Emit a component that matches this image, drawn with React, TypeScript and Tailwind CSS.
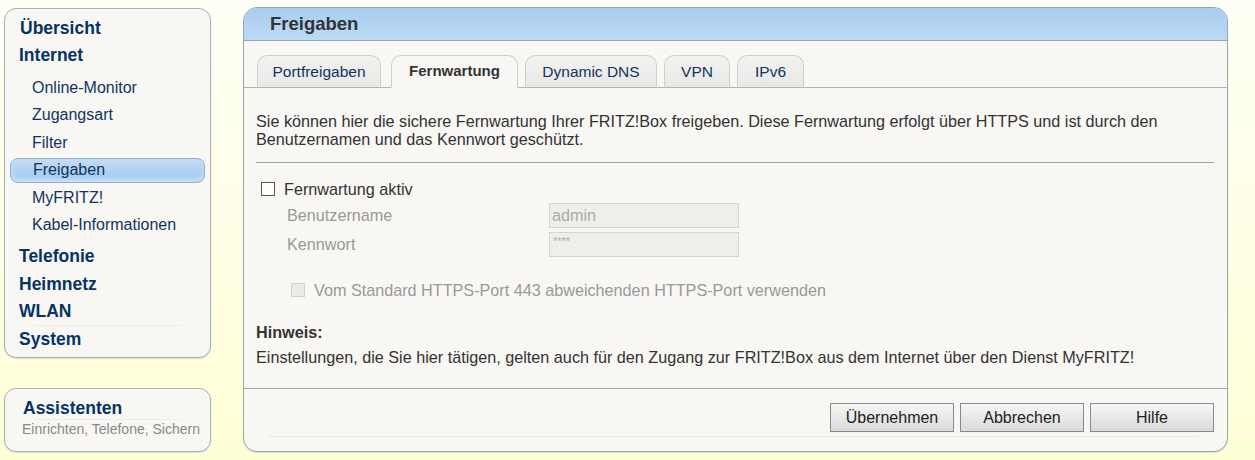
const navBold = 'text-[17.5px] font-bold text-[#063365]'
const navSub = 'text-[16px] text-[#12335e]'

function NavRow({ label, sub, active, className = '' }: { label: string; sub?: boolean; active?: boolean; className?: string }) {
  if (active) {
    return (
      <div className={`h-[27.5px] flex items-center ${className}`}>
        <div className="ml-[5px] w-[195px] h-[25px] flex items-center rounded-[8px] border border-[#8fb0c8] bg-[linear-gradient(to_bottom,#c4ddf3_0%,#b0d1f1_50%,#9ec8f3_100%)] shadow-[inset_0_-3px_4px_rgba(255,255,255,0.45)] pl-[22px]">
          <span className={navSub}>{label}</span>
        </div>
      </div>
    )
  }
  return (
    <div className={`h-[27.5px] flex items-center ${sub ? 'pl-[27px]' : 'pl-[14px]'} ${className}`}>
      <span className={sub ? navSub : navBold}>{label}</span>
    </div>
  )
}

function Tab({ label, w, active, className = '' }: { label: string; w: string; active?: boolean; className?: string }) {
  return (
    <div
      className={`${w} h-[33px] -mb-px flex items-center justify-center rounded-t-[10px] border border-[#cfcfcf] ${
        active
          ? 'bg-[#f8f7f3] border-b-[#f8f7f3] font-bold text-[15px] text-[#333]'
          : 'bg-[linear-gradient(to_bottom,#f2f2f0,#e8e8e6)] border-b-[#b4b4b4] text-[15.5px] text-[#12335e]'
      } ${className}`}
    >
      {label}
    </div>
  )
}

function Button({ label }: { label: string }) {
  return (
    <button className="w-[124px] h-[29px] border border-[#8a8a8a] bg-[linear-gradient(to_bottom,#f6f6f6,#dadada)] text-[16px] text-[#222]">
      {label}
    </button>
  )
}

export default function App() {
  return (
    <div
      className="w-[1255px] h-[460px] flex bg-[linear-gradient(to_bottom,#fffff6,#ffffd6)] text-[#333]"
      style={{ fontFamily: '"Liberation Sans", Arial, sans-serif' }}
    >
      {/* sidebar */}
      <div className="ml-[4px] mt-[8px] w-[207px] flex flex-col">
        <div className="h-[350px] rounded-[12px] border border-[#9fb3b8] bg-[#f8f7f3] shadow-[0_1px_1px_rgba(120,140,140,0.25)] pt-[5px]">
          <NavRow label="Übersicht" className="!pl-[15px]" />
          <NavRow label="Internet" />
          <NavRow label="Online-Monitor" sub className="mt-[5px]" />
          <NavRow label="Zugangsart" sub />
          <NavRow label="Filter" sub />
          <NavRow label="Freigaben" active />
          <NavRow label="MyFRITZ!" sub />
          <NavRow label="Kabel-Informationen" sub />
          <NavRow label="Telefonie" className="mt-[3.5px]" />
          <NavRow label="Heimnetz" />
          <NavRow label="WLAN" />
          <div className="mx-[29px] border-t border-[#ececea]" />
          <NavRow label="System" className="-mt-px" />
        </div>
        <div className="mt-[30px] h-[64px] rounded-[12px] border border-[#9fb3b8] bg-[#f8f7f3] shadow-[0_1px_1px_rgba(120,140,140,0.25)] pt-[9px] pl-[18px]">
          <div className={`${navBold} leading-[20px]`}>Assistenten</div>
          <div className="ml-[11px] mr-[28px] border-t border-[#ececea] mt-[1px]" />
          <div className="-ml-[1px] text-[14px] leading-[18px] text-[#888]">Einrichten, Telefone, Sichern</div>
        </div>
      </div>

      {/* main panel */}
      <div className="ml-[32px] mt-[7px] w-[985px] h-[445px] flex flex-col rounded-[14px] border border-[#93a8ab] bg-[#f8f7f3] overflow-hidden shadow-[0_1px_1px_rgba(120,140,140,0.25)]">
        <div className="h-[33px] shrink-0 flex items-center pl-[26px] border-b border-[#93a8ab] bg-[linear-gradient(to_bottom,#a9cdf0,#bcdaf4)]">
          <span className="text-[18.5px] font-bold text-[#333]">Freigaben</span>
        </div>

        <div className="pt-[14px] pl-[13px] flex items-end border-b border-[#b4b4b4]">
          <Tab label="Portfreigaben" w="w-[124px]" />
          <Tab label="Fernwartung" w="w-[127px]" active className="ml-[10px]" />
          <Tab label="Dynamic DNS" w="w-[132px]" className="ml-[7px]" />
          <Tab label="VPN" w="w-[66px]" className="ml-[7px]" />
          <Tab label="IPv6" w="w-[67px]" className="ml-[7px]" />
        </div>

        <div className="flex-1 px-[12px] pt-[24px] text-[16.2px]">
          <p className="leading-[18px] text-[#333]">
            Sie können hier die sichere Fernwartung Ihrer FRITZ!Box freigeben. Diese Fernwartung erfolgt über HTTPS und ist durch den
            <br />
            Benutzernamen und das Kennwort geschützt.
          </p>
          <div className="mt-[14px] mr-[1px] border-t border-[#8fa7ac]" />

          <div className="mt-[15px] h-[22px] flex items-center pl-[5px]">
            <div className="w-[14px] h-[14px] border border-[#555] bg-white" />
            <span className="ml-[9px] text-[#333]">Fernwartung aktiv</span>
          </div>

          <div className="mt-[3px] h-[25px] flex items-center pl-[31px]">
            <span className="w-[262px] text-[#999]">Benutzername</span>
            <div className="w-[190px] h-[25px] border border-[#d4d4d0] bg-[#efeeea] flex items-center pl-[2px] text-[#aaa]">admin</div>
          </div>
          <div className="mt-[4px] h-[25px] flex items-center pl-[31px]">
            <span className="w-[262px] text-[#999]">Kennwort</span>
            <div className="w-[190px] h-[25px] border border-[#d4d4d0] bg-[#efeeea] pl-[3px] pt-[1px] text-[11px] leading-[14px] text-[#aaa]">****</div>
          </div>

          <div className="mt-[22px] h-[22px] flex items-center pl-[35px]">
            <div className="w-[14px] h-[14px] border border-[#d0d0cc] bg-[#ecebe7]" />
            <span className="ml-[9px] text-[#999]">Vom Standard HTTPS-Port 443 abweichenden HTTPS-Port verwenden</span>
          </div>

          <div className="mt-[22px] leading-[18px] font-bold text-[#333]">Hinweis:</div>
          <div className="mt-[7px] leading-[18px] text-[#333]">
            Einstellungen, die Sie hier tätigen, gelten auch für den Zugang zur FRITZ!Box aus dem Internet über den Dienst MyFRITZ!
          </div>
        </div>

        <div className="h-[63px] shrink-0 border-t border-[#9aa9ab] flex flex-col">
          <div className="pt-[14px] pr-[13px] flex justify-end gap-[6px]">
            <Button label="Übernehmen" />
            <Button label="Abbrechen" />
            <Button label="Hilfe" />
          </div>
          <div className="mt-[4px] ml-[24px] mr-[28px] border-t border-[#ebebe7]" />
        </div>
      </div>
    </div>
  )
}
